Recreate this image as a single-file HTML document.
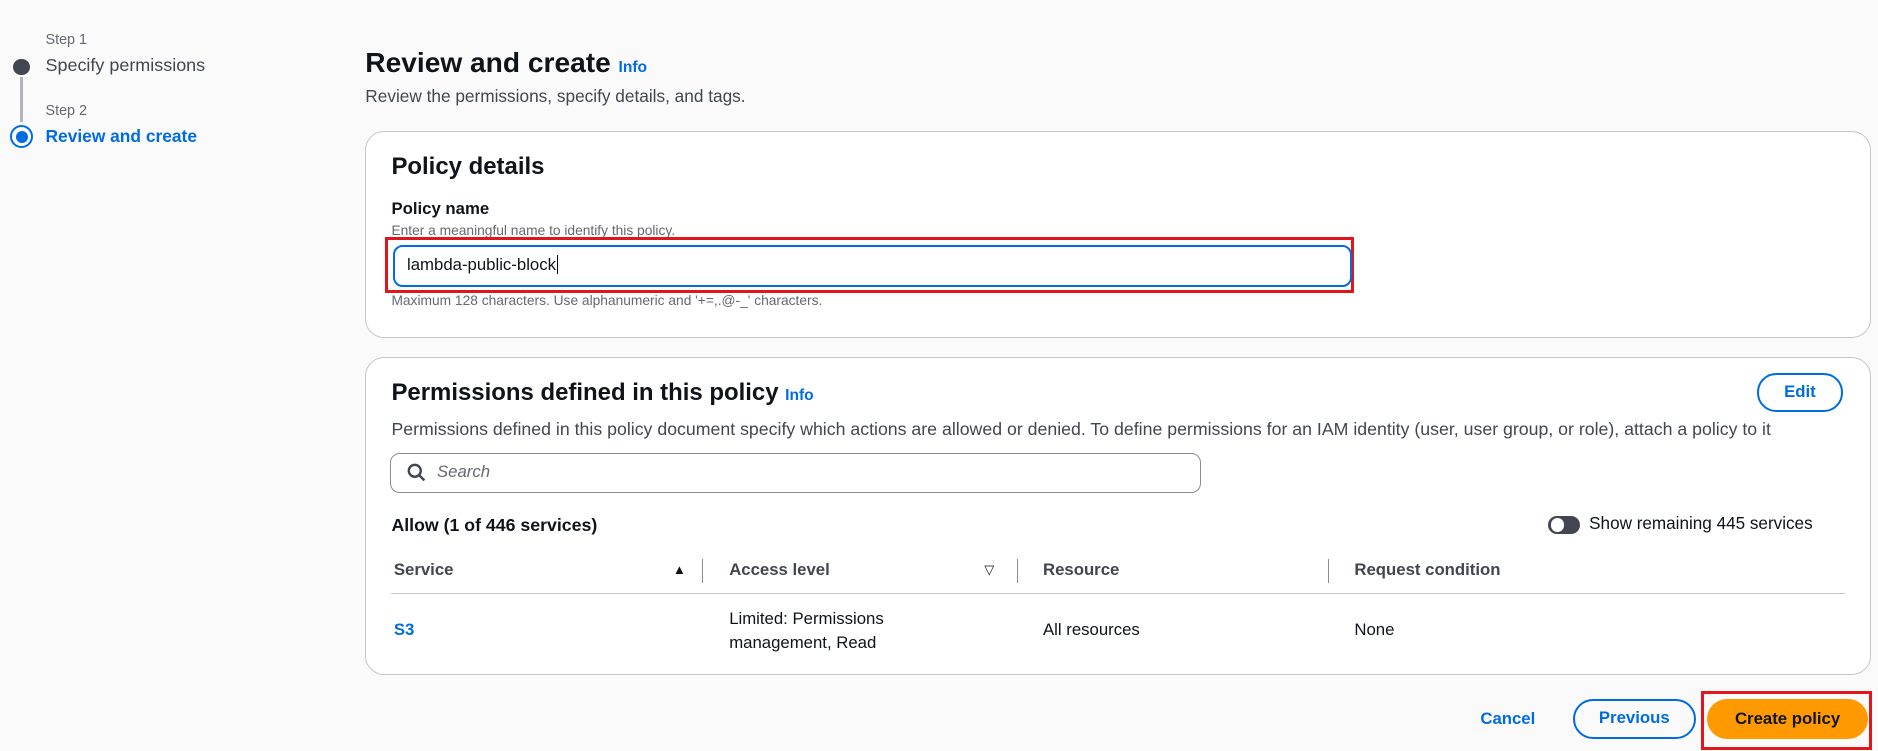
<!DOCTYPE html>
<html><head><meta charset="utf-8"><style>
html,body{margin:0;padding:0;background:#fafafa;}
body{width:1568px;height:627px;zoom:1.19770;position:relative;overflow:hidden;font-family:"Liberation Sans",sans-serif;color:#0f141a;}
.a{position:absolute;white-space:nowrap;}
.card{position:absolute;background:#fff;border:1px solid #c6c6cd;border-radius:16px;box-sizing:border-box;}
.blue{color:#006ce0;}
.b{font-weight:bold;}
.sm{font-size:12px;color:#656871;}
</style></head><body>
<div class="a sm" style="left:38px;top:27px;">Step 1</div>
<div class="a" style="left:38px;top:46px;font-size:15px;color:#424650;">Specify permissions</div>
<div class="a" style="left:11px;top:49px;width:14px;height:14px;border-radius:50%;background:#424650;"></div>
<div class="a" style="left:17px;top:64px;width:2px;height:38px;background:#b4b4bb;"></div>
<div class="a sm" style="left:38px;top:86px;">Step 2</div>
<div class="a blue b" style="left:38px;top:105px;font-size:14.5px;">Review and create</div>
<div class="a" style="left:8px;top:104px;width:16px;height:16px;border:2px solid #006ce0;border-radius:50%;background:#fff;"></div>
<div class="a" style="left:13px;top:109px;width:10px;height:10px;border-radius:50%;background:#006ce0;"></div>

<div class="a b" style="left:305px;top:39px;font-size:23.5px;">Review and create <span class="blue" style="font-size:13px;">Info</span></div>
<div class="a" style="left:305px;top:72px;font-size:14.4px;color:#424650;">Review the permissions, specify details, and tags.</div>

<div class="card" style="left:305px;top:109px;width:1257px;height:173px;">
<div class="a b" style="left:21px;top:18px;font-size:20px;">Policy details</div>
<div class="a b" style="left:21px;top:56px;font-size:14px;">Policy name</div>
<div class="a sm" style="left:21px;top:76px;font-size:11.5px;">Enter a meaningful name to identify this policy.</div>
<div class="a" style="left:16px;top:88px;width:809px;height:47px;border:3px solid #e0161c;box-sizing:border-box;"></div>
<div class="a" style="left:22px;top:95px;width:801px;height:35px;border:2px solid #006ce0;border-radius:8px;box-sizing:border-box;"></div>
<div class="a" style="left:34px;top:103px;font-size:14px;">lambda-public-block<span style="border-left:1px solid #000;margin-left:1px;"></span></div>
<div class="a sm" style="left:21px;top:135px;font-size:11.5px;">Maximum 128 characters. Use alphanumeric and '+=,.@-_' characters.</div>
</div>

<div class="card" style="left:305px;top:298px;width:1257px;height:266px;">
<div class="a b" style="left:21px;top:18px;font-size:20px;">Permissions defined in this policy <span class="blue" style="font-size:13px;">Info</span></div>
<div class="a b blue" style="left:1161px;top:13px;width:72px;height:32px;border:2px solid #006ce0;border-radius:16px;box-sizing:border-box;text-align:center;line-height:28px;font-size:14px;">Edit</div>
<div class="a" style="left:21px;top:51px;font-size:14.8px;color:#424650;">Permissions defined in this policy document specify which actions are allowed or denied. To define permissions for an IAM identity (user, user group, or role), attach a policy to it</div>
<div class="a" style="left:20px;top:79px;width:677px;height:34px;border:1px solid #8c8c94;border-radius:8px;box-sizing:border-box;"></div>
<svg class="a" style="left:34px;top:88px;" width="16" height="16" viewBox="0 0 16 16"><circle cx="6.5" cy="6.5" r="5" fill="none" stroke="#424650" stroke-width="2"/><path d="M10 10l4.5 4.5" stroke="#424650" stroke-width="2"/></svg>
<div class="a" style="left:59px;top:87px;font-size:14px;font-style:italic;color:#656871;">Search</div>
<div class="a b" style="left:21px;top:131px;font-size:14.8px;">Allow (1 of 446 services)</div>
<div class="a" style="left:987px;top:132px;width:26px;height:15px;border-radius:8px;background:#424650;"></div>
<div class="a" style="left:989px;top:134px;width:11px;height:11px;border-radius:50%;background:#fff;"></div>
<div class="a" style="left:1021px;top:130px;font-size:14.3px;">Show remaining 445 services</div>
<div class="a b" style="left:23px;top:169px;font-size:14px;color:#424650;">Service</div>
<div class="a" style="left:256px;top:170px;font-size:11px;">▲</div>
<div class="a" style="left:280px;top:168px;width:1px;height:20px;background:#8c8c94;"></div>
<div class="a b" style="left:303px;top:169px;font-size:14px;color:#424650;">Access level</div>
<div class="a" style="left:516px;top:170px;font-size:11px;">▽</div>
<div class="a" style="left:543px;top:168px;width:1px;height:20px;background:#8c8c94;"></div>
<div class="a b" style="left:565px;top:169px;font-size:14px;color:#424650;">Resource</div>
<div class="a" style="left:803px;top:168px;width:1px;height:20px;background:#8c8c94;"></div>
<div class="a b" style="left:825px;top:169px;font-size:14px;color:#424650;">Request condition</div>
<div class="a" style="left:21px;top:196px;width:1214px;height:1px;background:#c6c6cd;"></div>
<div class="a b blue" style="left:23px;top:219px;font-size:14px;">S3</div>
<div class="a" style="left:303px;top:208px;font-size:14px;line-height:20px;">Limited: Permissions<br>management, Read</div>
<div class="a" style="left:565px;top:219px;font-size:14px;">All resources</div>
<div class="a" style="left:825px;top:219px;font-size:14px;">None</div>
</div>

<div class="a b blue" style="left:1236px;top:592px;font-size:14px;">Cancel</div>
<div class="a b blue" style="left:1313px;top:584px;width:103px;height:33px;border:2px solid #006ce0;border-radius:17px;box-sizing:border-box;text-align:center;line-height:29px;font-size:14px;">Previous</div>
<div class="a" style="left:1420px;top:577px;width:143px;height:49px;border:3px solid #e0161c;box-sizing:border-box;"></div>
<div class="a b" style="left:1425px;top:584px;width:135px;height:33px;background:#ff9900;border-radius:17px;text-align:center;line-height:33px;font-size:14px;">Create policy</div>
</body></html>
